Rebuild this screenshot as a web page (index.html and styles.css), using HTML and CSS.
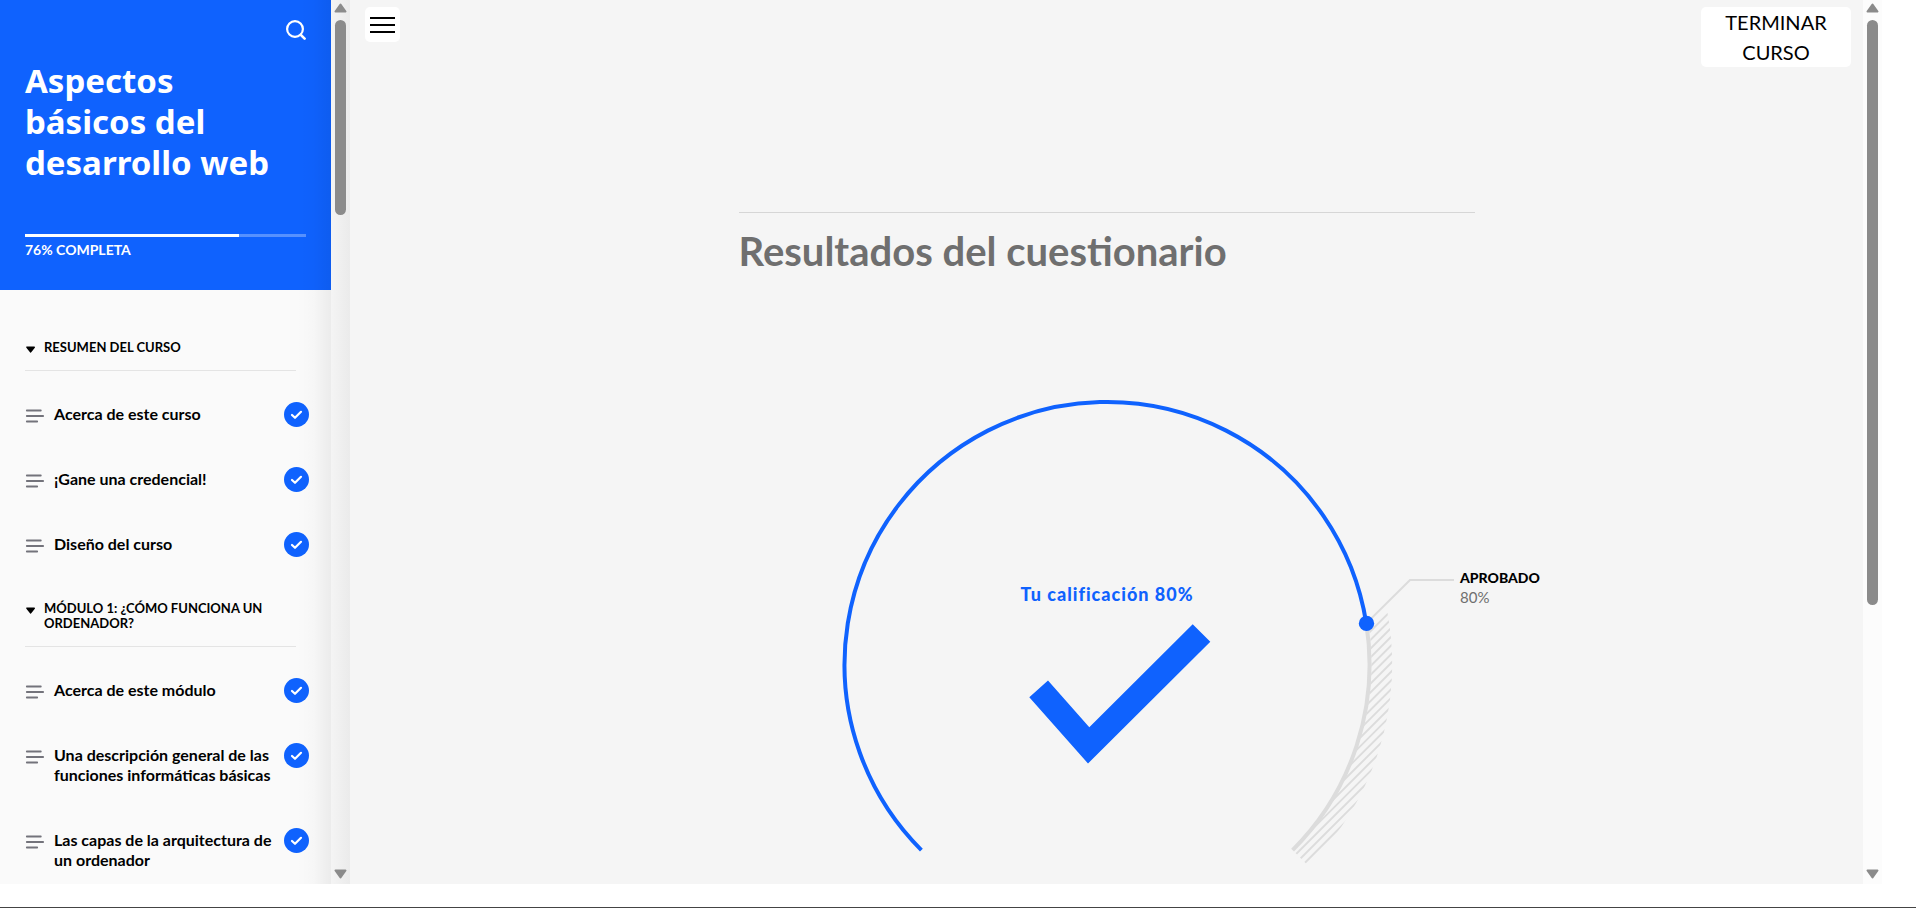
FILE: index.html
```html
<!DOCTYPE html>
<html lang="es">
<head>
<meta charset="utf-8">
<title>Aspectos básicos del desarrollo web</title>
<link rel="stylesheet" href="styles.css">
</head>
<body>
<svg class="sprite" aria-hidden="true">
  <symbol id="lines" viewBox="0 0 19 14"><path d="M1.800 1.500h14M1.800 7h16.400M1.800 12.500h10.400" fill="none" stroke="#73737b" stroke-width="1.800" stroke-linecap="round"/></symbol>
  <symbol id="done" viewBox="0 0 25 25"><circle cx="12.5" cy="12.5" r="12.5" fill="#0f62fe"/><path d="M8 13l3 2.800 6-6" fill="none" stroke="#fff" stroke-width="2.200" stroke-linecap="round" stroke-linejoin="round"/></symbol>
  <symbol id="caret" viewBox="0 0 11 7"><path d="M2 1.200h7.200L5.600 5.800z" fill="#000" stroke="#000" stroke-width="1.600" stroke-linejoin="round"/></symbol>
  <symbol id="up" viewBox="0 0 13 10"><path d="M6.500 1.500L11.500 8.500h-10z" fill="#8b8b8b" stroke="#8b8b8b" stroke-width="2" stroke-linejoin="round"/></symbol>
  <symbol id="down" viewBox="0 0 13 10"><path d="M6.500 8.500L11.500 1.500h-10z" fill="#8b8b8b" stroke="#8b8b8b" stroke-width="2" stroke-linejoin="round"/></symbol>
</svg>
<div class="app">
  <aside class="sidebar">
    <header class="course">
      <button class="search" type="button" aria-label="Buscar"><svg width="20" height="20" viewBox="0 0 20 20"><circle cx="9" cy="9" r="7.900" fill="none" stroke="#fff" stroke-width="2.200"/><path d="M14.800 14.800L18.600 18.600" stroke="#fff" stroke-width="2.600" stroke-linecap="round"/></svg></button>
      <h1 class="course-title">Aspectos básicos del desarrollo web</h1>
      <div class="progress"><div class="progress-value" style="width:76%"></div></div>
      <p class="progress-label">76% COMPLETA</p>
    </header>
    <nav class="outline">
      <section>
        <h2 class="section-title"><svg class="caret"><use href="#caret"/></svg><span>RESUMEN DEL CURSO</span></h2>
        <ul class="lessons">
          <li><a class="lesson" href="#l1"><svg class="lines"><use href="#lines"/></svg><span>Acerca de este curso</span><svg class="done"><use href="#done"/></svg></a></li>
          <li><a class="lesson" href="#l2"><svg class="lines"><use href="#lines"/></svg><span>¡Gane una credencial!</span><svg class="done"><use href="#done"/></svg></a></li>
          <li><a class="lesson" href="#l3"><svg class="lines"><use href="#lines"/></svg><span>Diseño del curso</span><svg class="done"><use href="#done"/></svg></a></li>
        </ul>
      </section>
      <section>
        <h2 class="section-title"><svg class="caret"><use href="#caret"/></svg><span>MÓDULO 1: ¿CÓMO FUNCIONA UN ORDENADOR?</span></h2>
        <ul class="lessons">
          <li><a class="lesson" href="#l4"><svg class="lines"><use href="#lines"/></svg><span>Acerca de este módulo</span><svg class="done"><use href="#done"/></svg></a></li>
          <li><a class="lesson" href="#l5"><svg class="lines"><use href="#lines"/></svg><span>Una descripción general de las funciones informáticas básicas</span><svg class="done"><use href="#done"/></svg></a></li>
          <li><a class="lesson" href="#l6"><svg class="lines"><use href="#lines"/></svg><span>Las capas de la arquitectura de un ordenador</span><svg class="done"><use href="#done"/></svg></a></li>
        </ul>
      </section>
    </nav>
  </aside>
  <div class="scrollbar scrollbar-side"><svg class="arrow"><use href="#up"/></svg><div class="track"><div class="thumb" style="height:23.2%"></div></div><svg class="arrow"><use href="#down"/></svg></div>
  <main class="main">
    <div class="toolbar">
      <button class="menu" type="button" aria-label="Menú"><span></span><span></span><span></span></button>
      <button class="finish" type="button">TERMINAR CURSO</button>
    </div>
    <article class="results">
      <h2 class="results-title">Resultados del cuestionario</h2>
      <svg class="gauge" viewBox="0 0 736 480" role="img" aria-label="Tu calificación 80%">
        <clipPath id="band"><path d="M627.500 217.600A263 263 0 0 1 554 455.500L569.500 471A285 285 0 0 0 648.500 218z"/></clipPath>
        <g clip-path="url(#band)" stroke="#dcdcdc" stroke-width="1.900">
          <path d="M547.700 320l150-150M556.400 320l150-150M565.100 320l150-150M573.900 320l150-150M582.600 320l150-150M591.400 320l150-150M600.100 320l150-150M558.800 370l150-150M567.600 370l150-150M576.300 370l150-150M585 370l150-150M543.800 420l150-150M552.500 420l150-150M561.300 420l150-150M570 420l150-150M528.800 470l150-150M537.500 470l150-150M546.200 470l150-150M555 470l150-150M563.700 470l150-150"/>
        </g>
        <path d="M627.300 228.400A262.500 262.500 0 0 1 553.600 455.100" fill="none" stroke="#dcdcdc" stroke-width="4"/>
        <path d="M627.300 228.400L671 185h44" fill="none" stroke="#dcdcdc" stroke-width="2"/>
        <path d="M182.400 455.100A262.500 262.500 0 1 1 627.300 228.400" fill="none" stroke="#0f62fe" stroke-width="4"/>
        <circle cx="627.500" cy="228.400" r="7.700" fill="#0f62fe"/>
        <path d="M453.700 229.300l17.600 17.400L349 368.400L290.300 302.300l18.700-16.700 41.300 46.700z" fill="#0f62fe"/>
        <text class="score" x="368" y="206">Tu calificación 80%</text>
        <text class="pass" x="721" y="188">APROBADO</text>
        <text class="pass-value" x="721" y="208">80%</text>
      </svg>
    </article>
  </main>
  <div class="scrollbar"><svg class="arrow"><use href="#up"/></svg><div class="track"><div class="thumb" style="height:69.5%"></div></div><svg class="arrow"><use href="#down"/></svg></div>
</div>
</body>
</html>
```
FILE: styles.css
```css
* { box-sizing: border-box; }
body {
  margin: 0;
  height: 100vh;
  padding: 0 34px 23px 0;
  border-bottom: 1px solid #444;
  background: #fff;
  color: #000;
  font-family: Lato, "Liberation Sans", sans-serif;
}
h1, h2, p, ul { margin: 0; padding: 0; }
ul { list-style: none; }
button { border: 0; padding: 0; font: inherit; color: inherit; }
.sprite { display: none; }
.app { display: flex; height: 100%; overflow: hidden; }

.sidebar {
  position: relative;
  flex: 0 0 331px;
  overflow: hidden;
  background: #fafafa;
}
.sidebar::after {
  content: "";
  position: absolute;
  inset: 0 0 0 auto;
  width: 34px;
  background: linear-gradient(to right, rgba(0,0,0,0), rgba(0,0,0,.015) 50%, rgba(0,0,0,.06));
  pointer-events: none;
}
.course {
  display: flex;
  flex-direction: column;
  padding: 20px 25px 31px;
  background: #0f62fe;
  color: #fff;
}
.search { align-self: flex-end; height: 20px; background: none; }
.search svg { display: block; }
.course-title {
  margin: 20px 0 51px;
  padding-right: 30px;
  font: 700 33px/41px "Noto Sans", sans-serif;
}
.progress { height: 3px; background: rgba(255,255,255,.3); }
.progress-value { height: 100%; background: #fff; }
.progress-label { margin-top: 4px; font-size: 14px; line-height: 18px; font-weight: 700; }

.outline { padding: 26px 22px 0 25px; }
.section-title {
  display: flex;
  gap: 8px;
  margin: 24px 13px 11px 0;
  padding-bottom: 15px;
  border-bottom: 1px solid #e4e4e4;
  font-size: 13px;
  line-height: 15px;
  font-weight: 700;
}
.caret { flex: none; width: 11px; height: 7px; margin-top: 6px; }
.lesson {
  display: grid;
  grid-template-columns: 19px 1fr 25px;
  column-gap: 5px;
  padding: 22px 0 23px;
  color: #000;
  font-size: 16px;
  line-height: 20px;
  font-weight: 700;
  text-decoration: none;
}
.lesson span { padding-left: 5px; }
.lines { width: 19px; height: 14px; margin-top: 5px; }
.done { width: 25px; height: 25px; margin: -2px 0 -5px; }

.scrollbar {
  display: flex;
  flex-direction: column;
  align-items: center;
  flex: 0 0 19px;
  padding: 3px 0 5px;
  background: #fcfcfc;
}
.scrollbar-side { background: linear-gradient(to right, #f4f4f4, #ebebeb); }
.arrow { flex: none; width: 13px; height: 10px; }
.track { flex: 1; width: 11px; margin: 7px 0; }
.thumb { border-radius: 6px; background: #8b8b8b; }

.main { flex: 1; min-width: 0; overflow: hidden; background: #f5f5f5; }
.toolbar {
  display: flex;
  align-items: flex-start;
  justify-content: space-between;
  height: 67px;
  padding: 7px 12px 0 15px;
}
.menu {
  display: flex;
  flex-direction: column;
  justify-content: center;
  gap: 5px;
  width: 35px;
  height: 35px;
  padding: 0 5px;
  border-radius: 5px;
  background: #fff;
}
.menu span { height: 2px; background: #000; }
.finish {
  width: 150px;
  height: 60px;
  padding: 0 20px 4px;
  border-radius: 5px;
  background: #fff;
  font-size: 20px;
  line-height: 30px;
}
.results { max-width: 736px; margin: 145px auto 0; border-top: 1px solid #d6d6d6; }
.results-title {
  padding-top: 13px;
  color: #6f6f6f;
  font-size: 40px;
  line-height: 50px;
  font-weight: 700;
}
.gauge { display: block; width: 100%; margin-top: 119px; overflow: visible; }
.score { fill: #0f62fe; font-size: 18px; font-weight: 900; letter-spacing: 1px; text-anchor: middle; }
.pass { font-size: 14px; font-weight: 900; }
.pass-value { fill: #6f6f6f; font-size: 15px; }
```
